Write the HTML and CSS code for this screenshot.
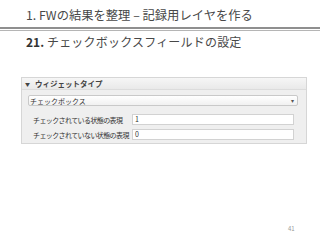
FILE: index.html
```html
<!DOCTYPE html>
<html lang="ja">
<head>
<meta charset="utf-8">
<link rel="stylesheet" href="styles.css">
</head>
<body>
<div class="slide">
  <h1 class="title">1. FWの結果を整理 – 記録用レイヤを作る</h1>
  <div class="rule"></div>
  <h2 class="subtitle"><b>21.</b> チェックボックスフィールドの設定</h2>
  <div class="panel">
    <div class="panel-head"><span class="tri">▼</span>ウィジェットタイプ</div>
    <div class="select"><span>チェックボックス</span><span class="arrow">▾</span></div>
    <div class="row"><span class="label">チェックされている状態の表現</span><span class="input">1</span></div>
    <div class="row"><span class="label">チェックされていない状態の表現</span><span class="input">0</span></div>
  </div>
  <div class="pagenum">41</div>
</div>
</body>
</html>
```

FILE: styles.css
```css
html, body {
  margin: 0;
  padding: 0;
  background: #ffffff;
}
.slide {
  width: 320px;
  height: 240px;
  position: relative;
  font-family: "Noto Sans CJK JP", "Noto Sans", sans-serif;
  color: #404040;
}
.title {
  margin: 0;
  padding: 7px 0 0 26px;
  font-size: 12.3px;
  font-weight: normal;
  line-height: 16px;
  height: 21px;
  box-sizing: border-box;
  color: #484848;
}
.rule {
  margin-top: 6px;
  height: 1px;
  border-top: 2px solid #8f8f8f;
  border-bottom: 1px solid #b5b5b5;
}
.subtitle {
  margin: 0;
  padding: 4px 0 0 26px;
  font-size: 12px;
  font-weight: normal;
  line-height: 14px;
  letter-spacing: 0.2px;
  color: #484848;
}
.subtitle b {
  font-weight: bold;
  letter-spacing: 0;
  color: #333;
}
.panel {
  margin: 28px 0 0 21px;
  width: 286px;
  height: 67px;
  box-sizing: border-box;
  background: #efefef;
  border: 1px solid #d6d6d6;
  font-size: 7px;
  color: #333;
}
.panel-head {
  height: 11px;
  line-height: 11px;
  background: linear-gradient(#f6f6f6, #e9e9e9);
  border-bottom: 1px solid #dcdcdc;
  padding-left: 3px;
  font-size: 7.5px;
  font-weight: bold;
  color: #444;
}
.tri {
  font-size: 5px;
  margin-right: 5px;
  vertical-align: 1px;
}
.select {
  margin: 5px 8px 0 6px;
  height: 11px;
  box-sizing: border-box;
  border: 1px solid #c9c9c9;
  border-radius: 2px;
  background: linear-gradient(#ffffff, #f1f1f1);
  display: flex;
  justify-content: space-between;
  align-items: center;
  padding: 0 3px 0 1px;
  font-size: 7px;
}
.arrow {
  font-size: 6px;
  color: #555;
}
.row {
  display: flex;
  align-items: center;
  margin: 0 12px 0 11px;
  height: 11px;
}
.select + .row {
  margin-top: 8px;
}
.row + .row {
  margin-top: 4px;
}
.label {
  width: 99px;
  white-space: nowrap;
  font-size: 7px;
  letter-spacing: -0.6px;
}
.input {
  flex: 1;
  height: 11px;
  box-sizing: border-box;
  background: #ffffff;
  border: 1px solid #d2d2d2;
  font-size: 7px;
  line-height: 9px;
  padding-left: 2px;
}
.pagenum {
  position: absolute;
  left: 288px;
  top: 224px;
  font-size: 6px;
  color: #999;
}
```
